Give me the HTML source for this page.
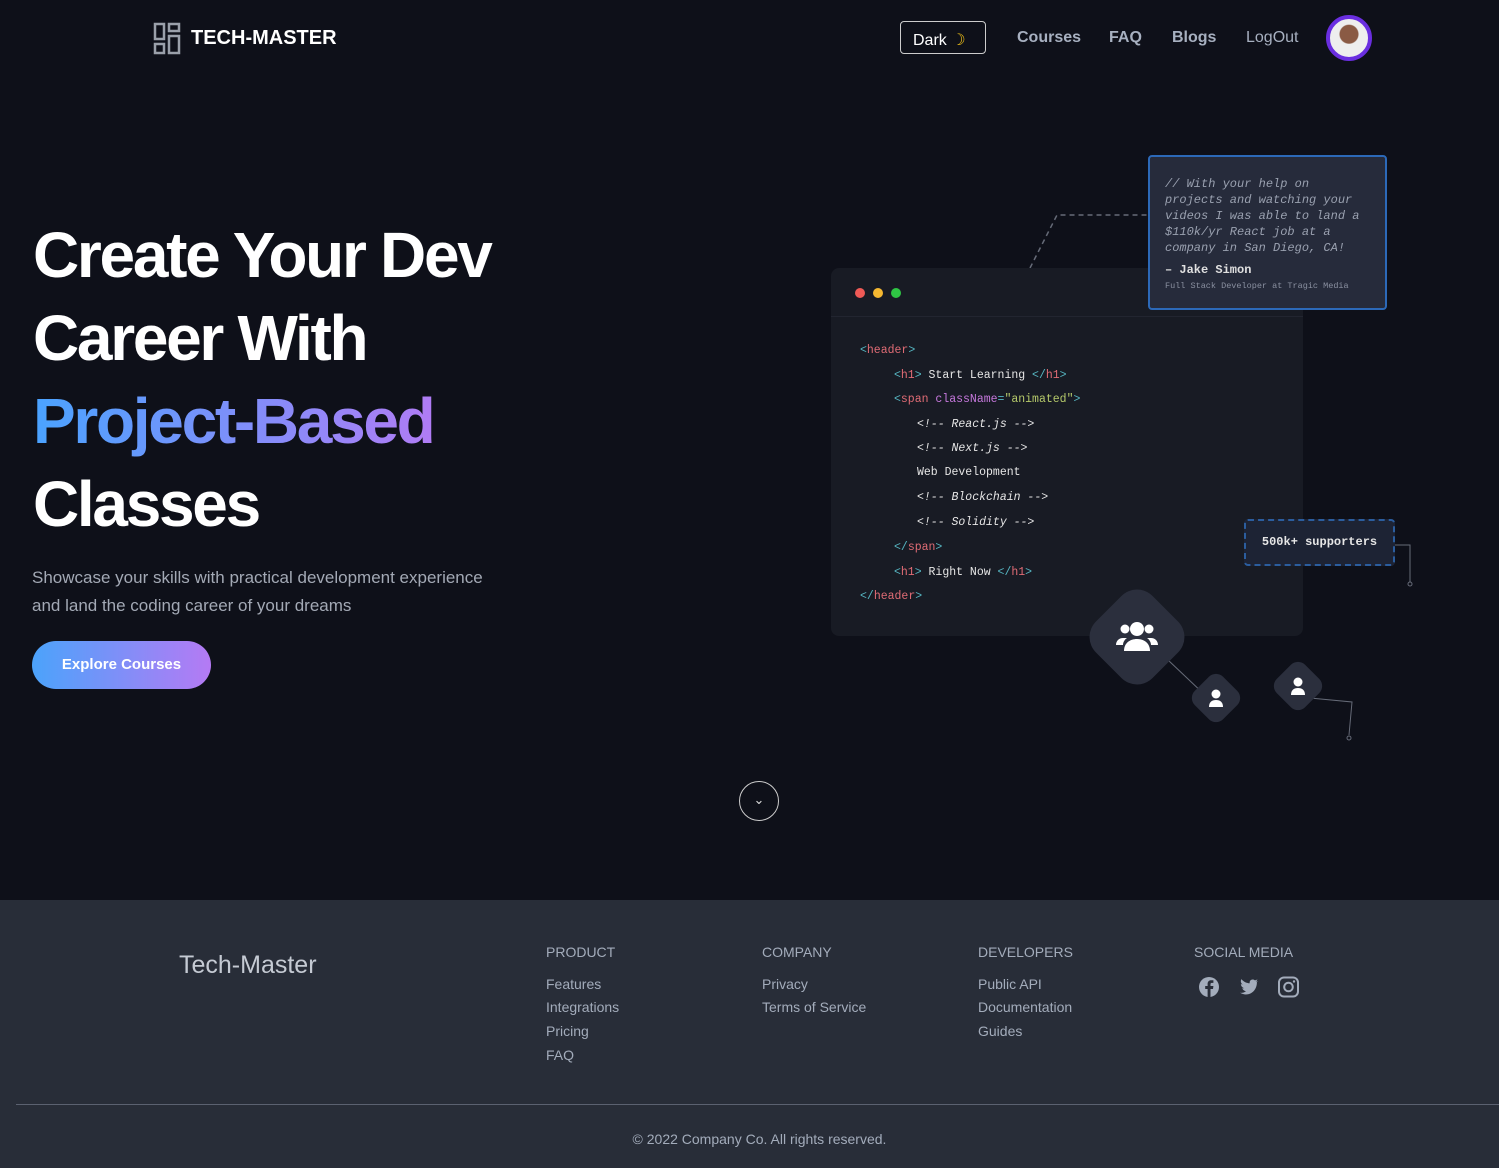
<!DOCTYPE html>
<html><head><meta charset="utf-8">
<style>
*{margin:0;padding:0;box-sizing:border-box}
body{width:1499px;height:1168px;background:#0e1019;font-family:"Liberation Sans",sans-serif;color:#fff;position:relative;overflow:hidden}
.abs{position:absolute}
.nav a{position:absolute;top:29px;font-size:16px;color:#a7b0c0;font-weight:bold}
h1{position:absolute;left:33px;top:214px;font-size:64px;line-height:83px;font-weight:bold;letter-spacing:-2.3px;color:#fff}
.grad{background:linear-gradient(90deg,#4aa3ff,#b07cf5);-webkit-background-clip:text;background-clip:text;color:transparent}
.mono{font-family:"Liberation Mono",monospace}
.code div{position:absolute;font-size:11.5px;white-space:pre;color:#e6e6e6}
.t{color:#e06c75}.p{color:#56b6c2}.a{color:#c678dd}.s{color:#b5c96a}.c{color:#8a8f99;font-style:italic}
.foot{position:absolute;left:0;top:900px;width:1499px;height:268px;background:#282d38}
.foot h4{position:absolute;top:44px;font-size:14px;font-weight:normal;color:#a3acbb}
.foot a{position:absolute;font-size:14px;color:#a3acbb}
.dia{position:absolute;background:#2b2f3d;transform:rotate(45deg);border-radius:14px}
</style></head><body>
<svg class="abs" style="left:153px;top:22px" width="28" height="33" viewBox="0 0 28 33"><g fill="none" stroke="#9aa0aa" stroke-width="2.5"><rect x="2" y="2" width="9" height="15"/><rect x="16" y="2" width="10" height="7"/><rect x="2" y="22" width="9" height="9"/><rect x="16" y="14" width="10" height="17"/></g></svg>
<div class="abs" style="left:191px;top:27px;font-size:20px;font-weight:bold;color:#fff">TECH-MASTER</div>
<div class="abs" style="left:900px;top:21px;width:86px;height:33px;border:1px solid #ccc;border-radius:4px;font-size:16px;padding:8px 12px;color:#fff">Dark <span style="color:#f5c518">☽</span></div>
<div class="nav"><a style="left:1017px">Courses</a><a style="left:1109px">FAQ</a><a style="left:1172px">Blogs</a><a style="left:1246px;font-weight:normal">LogOut</a></div>
<div class="abs" style="left:1326px;top:15px;width:46px;height:46px;border-radius:50%;border:4px solid #6a2ee0;background:radial-gradient(circle at 50% 40%,#8a5a44 0 9px,#eee 10px)"></div>

<h1>Create Your Dev<br>Career With<br><span class="grad">Project-Based</span><br>Classes</h1>
<div class="abs" style="left:32px;top:564px;font-size:17px;line-height:28px;color:#a3a9b5">Showcase your skills with practical development experience<br>and land the coding career of your dreams</div>
<div class="abs" style="left:32px;top:641px;width:179px;height:48px;border-radius:24px;background:linear-gradient(90deg,#4ba3fb,#b57af4);font-size:15px;font-weight:bold;text-align:center;line-height:48px">Explore Courses</div>
<div class="abs" style="left:739px;top:781px;width:40px;height:40px;border-radius:50%;border:1.5px solid #ccc;text-align:center;line-height:36px;font-size:13px;color:#ddd">⌄</div>

<svg class="abs" style="left:1020px;top:200px" width="420" height="550"><g fill="none" stroke="#666b78" stroke-width="1.5" stroke-dasharray="5 4"><path d="M10 68 L37 15 L130 15"/><path d="M150 390 L178 350 L226 350"/></g><g fill="none" stroke="#666b78" stroke-width="1"><path d="M375 345 L390 345 L390 382"/><circle cx="390" cy="384" r="2"/><path d="M290 498 L332 502 L329 535"/><circle cx="329" cy="538" r="2"/><path d="M148 460 L186 496"/></g></svg>

<div class="abs" style="left:831px;top:268px;width:472px;height:368px;background:#181b24;border-radius:8px"></div>
<div class="abs" style="left:831px;top:316px;width:472px;height:1px;background:#222530"></div>
<div class="abs" style="left:855px;top:288px;width:10px;height:10px;border-radius:50%;background:#ef5a56"></div>
<div class="abs" style="left:873px;top:288px;width:10px;height:10px;border-radius:50%;background:#f5b831"></div>
<div class="abs" style="left:891px;top:288px;width:10px;height:10px;border-radius:50%;background:#2fc544"></div>
<div class="code mono">
<div style="left:860px;top:344px"><span class="p">&lt;</span><span class="t">header</span><span class="p">&gt;</span></div>
<div style="left:894px;top:369px"><span class="p">&lt;</span><span class="t">h1</span><span class="p">&gt;</span> Start Learning <span class="p">&lt;/</span><span class="t">h1</span><span class="p">&gt;</span></div>
<div style="left:894px;top:393px"><span class="p">&lt;</span><span class="t">span</span> <span class="a">className</span><span class="p">=</span><span class="s">"animated"</span><span class="p">&gt;</span></div>
<div style="left:917px;top:418px" class="c">&lt;!-- React.js --&gt;</div>
<div style="left:917px;top:442px" class="c">&lt;!-- Next.js --&gt;</div>
<div style="left:917px;top:466px">Web Development</div>
<div style="left:917px;top:491px" class="c">&lt;!-- Blockchain --&gt;</div>
<div style="left:917px;top:516px" class="c">&lt;!-- Solidity --&gt;</div>
<div style="left:894px;top:541px"><span class="p">&lt;/</span><span class="t">span</span><span class="p">&gt;</span></div>
<div style="left:894px;top:566px"><span class="p">&lt;</span><span class="t">h1</span><span class="p">&gt;</span> Right Now <span class="p">&lt;/</span><span class="t">h1</span><span class="p">&gt;</span></div>
<div style="left:860px;top:590px"><span class="p">&lt;/</span><span class="t">header</span><span class="p">&gt;</span></div>
</div>

<div class="abs mono" style="left:1148px;top:155px;width:239px;height:155px;background:#262b3b;border:2px solid #2c69b8;border-radius:4px;padding:19px 20px 0 15px;font-size:12px;line-height:16px;color:#9aa1b0;font-style:italic">// With your help on projects and watching your videos I was able to land a $110k/yr React job at a company in San Diego, CA!<div style="font-style:normal;color:#e0e0e0;margin-top:6px;font-size:12px;font-weight:bold">– Jake Simon</div><div style="font-style:normal;font-size:8.5px;color:#8a90a0;white-space:nowrap">Full Stack Developer at Tragic Media</div></div>
<div class="abs mono" style="left:1244px;top:519px;width:151px;height:47px;background:#1d2334;border:2px dashed #2b5d9e;border-radius:4px;font-size:12px;font-weight:bold;line-height:43px;text-align:center;color:#e6e6e6">500k+ supporters</div>

<div class="dia" style="left:1097px;top:597px;width:80px;height:80px;border-radius:22px"></div>
<div class="abs" style="left:1115px;top:618px">
<svg width="44" height="36" viewBox="0 0 44 36" fill="#fff"><circle cx="22" cy="11" r="7"/><circle cx="10" cy="11" r="4.5"/><circle cx="34" cy="11" r="4.5"/><path d="M9 33c0-8 6-12 13-12s13 4 13 12z"/><path d="M1 27c0-4 3-7 7-7h4c-3 2-4 5-4 7z"/><path d="M43 27c0-4-3-7-7-7h-4c3 2 4 5 4 7z"/></svg></div>
<div class="dia" style="left:1196px;top:678px;width:40px;height:40px;border-radius:10px"></div>
<svg class="abs" style="left:1207px;top:688px" width="18" height="20" viewBox="0 0 18 20" fill="#fff"><circle cx="9" cy="6" r="4.5"/><path d="M2 19c0-5 3-7 7-7s7 2 7 7z"/></svg>
<div class="dia" style="left:1278px;top:666px;width:40px;height:40px;border-radius:10px"></div>
<svg class="abs" style="left:1289px;top:676px" width="18" height="20" viewBox="0 0 18 20" fill="#fff"><circle cx="9" cy="6" r="4.5"/><path d="M2 19c0-5 3-7 7-7s7 2 7 7z"/></svg>

<div class="foot">
<div class="abs" style="left:179px;top:51px;font-size:25px;color:#c5cad3">Tech-Master</div>
<h4 style="left:546px">PRODUCT</h4><h4 style="left:762px">COMPANY</h4><h4 style="left:978px">DEVELOPERS</h4><h4 style="left:1194px">SOCIAL MEDIA</h4>
<a style="left:546px;top:76px">Features</a><a style="left:546px;top:99px">Integrations</a><a style="left:546px;top:123px">Pricing</a><a style="left:546px;top:147px">FAQ</a>
<a style="left:762px;top:76px">Privacy</a><a style="left:762px;top:99px">Terms of Service</a>
<a style="left:978px;top:76px">Public API</a><a style="left:978px;top:99px">Documentation</a><a style="left:978px;top:123px">Guides</a>
<svg class="abs" style="left:1198px;top:76px" width="110" height="22" viewBox="0 0 110 22"><circle cx="11" cy="11" r="10" fill="#a3acbb"/><path d="M12.5 21V13h2.5l.4-3h-2.9V8.3c0-.8.3-1.4 1.4-1.4h1.5V4.3c-.3 0-1.2-.1-2.2-.1-2.2 0-3.6 1.3-3.6 3.7V10H7.2v3h2.4v8z" fill="#282d38"/><path d="M60 5c-.7.3-1.5.5-2.3.6.8-.5 1.500-1.3 1.7-2.2-.8.5-1.6.8-2.5 1-1.6-1.7-4.6-1-5.2 1.3-.1.6-.1 1.1 0 1.6-3.3-.2-6.3-1.7-8.3-4.2-1.1 1.9-.5 4.2 1.3 5.4-.6 0-1.2-.2-1.8-.5 0 2 1.4 3.7 3.3 4.1-.6.2-1.2.2-1.9.1.5 1.7 2.1 2.8 3.8 2.9-1.7 1.4-3.9 2-6 1.7 7.6 4.6 17-.6 16.8-10.8.8-.6 1.5-1.3 2-2.1z" fill="#a3acbb"/><rect x="81" y="1.5" width="19" height="19" rx="5" fill="none" stroke="#a3acbb" stroke-width="2"/><circle cx="90.5" cy="11" r="4.3" fill="none" stroke="#a3acbb" stroke-width="2"/><circle cx="96" cy="5.5" r="1.2" fill="#a3acbb"/></svg>
<div class="abs" style="left:16px;top:204px;width:1483px;height:1px;background:#5b6170"></div>
<div class="abs" style="left:0;top:231px;width:1519px;text-align:center;font-size:14px;color:#a3acbb">© 2022 Company Co. All rights reserved.</div>
</div>
</body></html>
